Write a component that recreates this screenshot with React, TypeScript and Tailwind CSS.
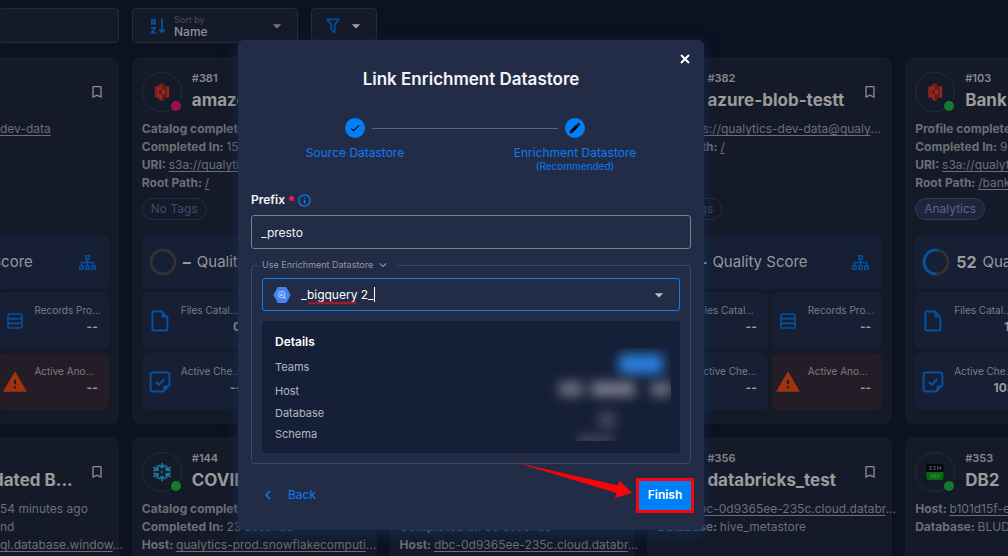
import React from "react";
import {
  MdArrowDropDown,
  MdBookmarkBorder,
  MdCheck,
  MdChevronLeft,
  MdEdit,
  MdExpandMore,
  MdInfoOutline,
  MdWarning,
} from "react-icons/md";

type Logo = "s3" | "snowflake" | "db2" | "none";

interface Line {
  label?: string;
  value: string;
  link?: boolean;
}

interface Store {
  id?: string;
  name?: string;
  logo: Logo;
  status?: "ok" | "error";
  lines: Line[];
  tag?: string;
  score?: string;
  files?: string;
  checks?: string;
  clipped?: boolean;
}

const topRow: Store[] = [
  { logo: "none", clipped: true, lines: [{ value: "dev-data", link: true }], score: "" },
  {
    id: "#381",
    name: "amazon",
    logo: "s3",
    status: "error",
    lines: [
      { label: "Catalog completed", value: "" },
      { label: "Completed In:", value: "15" },
      { label: "URI:", value: "s3a://qualytics", link: true },
      { label: "Root Path:", value: "/", link: true },
    ],
    tag: "No Tags",
    score: "–",
    files: "0",
    checks: "--",
  },
  { logo: "none", lines: [] },
  {
    id: "#382",
    name: "azure-blob-testt",
    logo: "none",
    lines: [
      { label: "URI:", value: "abfs://qualytics-dev-data@qualy", link: true },
      { label: "Root Path:", value: "/", link: true },
    ],
    tag: "No Tags",
    score: "–",
    files: "--",
    checks: "--",
  },
  {
    id: "#103",
    name: "Bank Dataset",
    logo: "s3",
    status: "ok",
    lines: [
      { label: "Profile completed", value: "" },
      { label: "Completed In:", value: "9 seconds" },
      { label: "URI:", value: "s3a://qualytics", link: true },
      { label: "Root Path:", value: "/bank", link: true },
    ],
    tag: "Analytics",
    score: "52",
    files: "11",
    checks: "103",
  },
];

const bottomRow: Store[] = [
  {
    name: "dated B...",
    logo: "none",
    clipped: true,
    lines: [
      { value: "54 minutes ago" },
      { value: "nd" },
      { value: "ql.database.window", link: true },
    ],
  },
  {
    id: "#144",
    name: "COVID",
    logo: "snowflake",
    status: "ok",
    lines: [
      { label: "Catalog completed", value: "" },
      { label: "Completed In:", value: "23 seconds" },
      { label: "Host:", value: "qualytics-prod.snowflakecomputi", link: true },
    ],
  },
  {
    logo: "none",
    lines: [
      { value: "" },
      { label: "Completed In:", value: "30 seconds" },
      { label: "Host:", value: "dbc-0d9365ee-235c.cloud.databr", link: true },
    ],
  },
  {
    id: "#356",
    name: "databricks_test",
    logo: "none",
    lines: [
      { label: "Host:", value: "dbc-0d9365ee-235c.cloud.databr", link: true },
      { label: "Database:", value: "hive_metastore" },
    ],
  },
  {
    id: "#353",
    name: "DB2",
    logo: "db2",
    status: "ok",
    lines: [
      { label: "Host:", value: "b101d15f-e7", link: true },
      { label: "Database:", value: "BLUDB" },
    ],
  },
];

function SortIcon() {
  return (
    <svg viewBox="0 0 16 16" className="h-4 w-4 shrink-0 text-[#04529f]" fill="none" stroke="currentColor" strokeWidth="1.8">
      <path d="M1.8 7V1.8H5V7M1.8 4.8H5M1 9.8H5.2L1.8 14.6H5.8" />
      <path d="M12 0.5V14M9.2 11.4L12 14.2L14.8 11.4" />
    </svg>
  );
}

function FilterIcon() {
  return (
    <svg viewBox="0 0 24 24" className="h-5 w-5 text-[#04529f]" fill="currentColor">
      <path d="M15,19.88C15.04,20.18 14.94,20.5 14.71,20.71C14.32,21.1 13.69,21.1 13.3,20.71L9.29,16.7C9.06,16.47 8.96,16.16 9,15.87V10.75L4.21,4.62C3.87,4.19 3.95,3.56 4.38,3.22C4.57,3.08 4.78,3 5,3H19C19.22,3 19.43,3.08 19.62,3.22C20.05,3.56 20.13,4.19 19.79,4.62L15,10.75V19.88M7.04,5L11,10.06V15.58L13,17.58V10.05L16.96,5H7.04Z" />
    </svg>
  );
}

function SitemapIcon() {
  return (
    <svg viewBox="0 0 17 15" className="h-[15px] w-[17px] text-[#04529f]" fill="none" stroke="currentColor" strokeWidth="1.5">
      <rect x="6.8" y="0.8" width="3.4" height="3.2" />
      <rect x="0.8" y="11" width="3.4" height="3.2" />
      <rect x="6.8" y="11" width="3.4" height="3.2" />
      <rect x="12.8" y="11" width="3.4" height="3.2" />
      <path d="M8.5 4V11M2.5 11V7.6H14.5V11" />
    </svg>
  );
}

function RecordsIcon() {
  return (
    <svg viewBox="0 0 16 16" className="h-4 w-4 text-[#04529f]" fill="none" stroke="currentColor" strokeWidth="1.6">
      <rect x="1" y="1" width="14" height="14" rx="1.6" />
      <path d="M1 5.6H15M1 10.4H15" />
    </svg>
  );
}

function FileIcon() {
  return (
    <svg viewBox="0 0 18 22" className="h-[22px] w-[18px] text-[#04529f]" fill="none" stroke="currentColor" strokeWidth="2">
      <path d="M2.6 1.4H11L16.4 7.4V19Q16.4 20.6 14.8 20.6H2.8Q1.4 20.6 1.4 19V2.8Q1.4 1.4 2.6 1.4Z" strokeLinejoin="round" />
      <path d="M10.6 1.2V7.6H16.6Z" fill="currentColor" stroke="none" />
    </svg>
  );
}

function CheckNoteIcon() {
  return (
    <svg viewBox="0 0 22 22" className="h-[22px] w-[22px] text-[#04529f]" fill="none" stroke="currentColor" strokeWidth="2">
      <path d="M14.6 20.4H4Q1.6 20.4 1.6 18V4Q1.6 1.6 4 1.6H18Q20.4 1.6 20.4 4V14.4Z" strokeLinejoin="round" />
      <path d="M14.4 20.6V16Q14.4 14.4 16 14.4H20.6Z" fill="currentColor" stroke="none" />
      <path d="M6.8 11L9.8 13.8L15.4 8" />
    </svg>
  );
}

function LogoMark({ logo }: { logo: Logo }) {
  if (logo === "s3")
    return (
      <svg viewBox="0 0 18 20" className="h-[18px] w-4">
        <path d="M1 4.2L3.4 3.2V16.8L1 15.8Z" fill="#7d231e" />
        <path d="M3.4 3.2L9 4.4V15.6L3.4 16.8Z" fill="#93281f" />
        <path d="M17 4.2L14.6 3.2V16.8L17 15.8Z" fill="#93281f" />
        <path d="M14.6 3.2L9 4.4V15.6L14.6 16.8Z" fill="#6c1f1b" />
        <path d="M9 0L12.4 1.7V6.2L9 6.8L5.6 6.2V1.7Z" fill="#7d241f" />
        <path d="M9 0L12.4 1.7V6.2L9 6.8Z" fill="#5c1a18" />
        <path d="M9 8L12.4 8.4V11.6L9 12L5.6 11.6V8.4Z" fill="#55191a" />
        <path d="M9 8L12.4 8.4V11.6L9 12Z" fill="#9a3529" />
        <path d="M9 13.2L12.4 13.8V18.3L9 20L5.6 18.3V13.8Z" fill="#8d291f" />
        <path d="M9 13.2L12.4 13.8V18.3L9 20Z" fill="#5c1a18" />
      </svg>
    );
  if (logo === "snowflake")
    return (
      <svg viewBox="-10 -10 20 20" className="h-5 w-5" fill="none" stroke="#1a7498" strokeWidth="1.9" strokeLinecap="round" strokeLinejoin="round">
        <path d="M-2.6 -6.6L0 -4.6L2.6 -6.6M0 -4.6V-8.4" />
        <path d="M-2.6 6.6L0 4.6L2.6 6.6M0 4.6V8.4" />
        <path d="M-8 -4.4L-4 -2.2L-4.6 -5.8M-4 -2.2L-8 -1.4" />
        <path d="M8 -4.4L4 -2.2L4.6 -5.8M4 -2.2L8 -1.4" />
        <path d="M-8 4.4L-4 2.2L-4.6 5.8M-4 2.2L-8 1.4" />
        <path d="M8 4.4L4 2.2L4.6 5.8M4 2.2L8 1.4" />
        <path d="M0 -1.4L1.4 0L0 1.4L-1.4 0Z" strokeWidth="1" />
      </svg>
    );
  if (logo === "db2")
    return (
      <svg viewBox="0 0 18 18" className="h-[18px] w-[18px]">
        <rect x="0.5" y="1" width="17" height="16" rx="2.5" fill="#02060a" />
        <path d="M0.5 9H17.5V14.5Q17.5 17 15 17H3Q0.5 17 0.5 14.5Z" fill="#0a6a12" />
        <path d="M3.4 3.5H5.6M4.5 3.5V6.5M3.4 6.5H5.6M7.4 3.5H9.8M7.4 5H9.8M7.4 6.5H9.8M11.6 6.8V3.5L13.1 5.5L14.6 3.5V6.8" fill="none" stroke="#707070" strokeWidth="0.7" />
        <path d="M5 11.5V14.5H6.8V11.5ZM8.4 11.5H9.8V14.5H8.4ZM11.4 11.5H13V13H11.6V14.5H13.2" fill="none" stroke="#4f9455" strokeWidth="0.6" />
      </svg>
    );
  return null;
}

function ScoreRing({ value }: { value: number }) {
  return (
    <svg viewBox="0 0 28 28" className="h-7 w-7 shrink-0" fill="none" strokeWidth="2.8">
      <circle cx="14" cy="14" r="12" stroke="#333230" />
      {value > 0 && (
        <circle cx="14" cy="14" r="12" stroke="#04529f" pathLength={100} strokeDasharray={`${value} 100`} transform="rotate(90 14 14)" />
      )}
    </svg>
  );
}

interface MetricProps {
  icon: React.ReactNode;
  label: string;
  value: string;
  danger?: boolean;
  narrow?: boolean;
}

function Metric({ icon, label, value, danger, narrow }: MetricProps) {
  return (
    <div className={`flex h-[57px] items-center rounded-md pr-[11px] ${danger ? "bg-[#241c26]" : "bg-[#161f34]"}`}>
      <div className={`flex shrink-0 items-center justify-center ${narrow ? "w-[33px]" : "w-9"}`}>{icon}</div>
      <div className="flex min-w-0 flex-1 flex-col pb-1 pl-[3px]">
        <span className="whitespace-nowrap text-[10px] leading-4 text-[#7b7d82]">{label}</span>
        <span className="text-right text-xs font-bold leading-[18px] text-[#9b9b9b]">{value}</span>
      </div>
    </div>
  );
}

function StoreCard({ store }: { store: Store }) {
  const clip = store.clipped;
  return (
    <article className="flex min-h-[367px] min-w-0 flex-col rounded-lg bg-[#151a29] px-2.5 pb-3.5 pt-[15px]">
      <header className="flex h-10 items-center">
        <div className="relative flex h-10 w-10 shrink-0 items-center justify-center rounded-full border border-[#262b38]">
          <LogoMark logo={store.logo} />
          {store.status && (
            <span className={`absolute bottom-0 right-0 h-2.5 w-2.5 rounded-full ${store.status === "ok" ? "bg-[#157a2b]" : "bg-[#9c1145]"}`} />
          )}
        </div>
        <div className={`flex min-w-0 flex-1 flex-col justify-center ${clip ? "items-end pr-4" : "pl-2.5"}`}>
          <span className="h-4 text-[11px] font-semibold leading-4 text-[#87888b]">{store.id}</span>
          <h2 className="h-7 whitespace-nowrap text-[17px] font-bold leading-7 text-[#9b9b9b]">{store.name}</h2>
        </div>
        <button type="button" aria-label="Bookmark" className="mr-1 shrink-0 text-[#8c8d90]">
          <MdBookmarkBorder className="h-4 w-4" />
        </button>
      </header>
      <div className={`mt-2 flex h-[71px] flex-col text-xs leading-[18px] text-[#6c6f75] ${clip ? "pl-[116px]" : ""}`}>
        {store.lines.map((line, i) => (
          <p key={i} className="h-[18px] whitespace-nowrap">
            {line.label && <b className="font-bold">{line.label} </b>}
            {line.link ? (
              <a href="#" className="underline underline-offset-2">{line.value}</a>
            ) : (
              line.value
            )}
            {line.link && line.value.length > 17 && "..."}
          </p>
        ))}
      </div>
      {store.score !== undefined && (
        <>
          <div className="mt-[7px] flex h-[22px]">
            {store.tag && (
              <span className={`flex h-[22px] items-center rounded-full border px-2 text-xs ${store.tag === "Analytics" ? "border-[#32385a] bg-[#20253c] text-[#5b628a]" : "border-[#262d42] text-[#3f4a74]"}`}>
                {store.tag}
              </span>
            )}
          </div>
          <div className="mt-[15px] flex h-[54px] items-center rounded-md bg-[#161f34] pl-[7px] pr-[13px]">
            <ScoreRing value={Number(store.score) || 0} />
            {store.score && <b className="ml-1.5 text-base font-bold text-[#9b9b9b]">{store.score}</b>}
            <span className={`text-[15px] text-[#97999d] ${clip ? "flex-1 pr-[46px] text-right" : "ml-1.5 flex-1"}`}>Quality Score</span>
            <SitemapIcon />
          </div>
          <div className="mt-[3px] grid grid-cols-2 gap-1">
            <Metric icon={<FileIcon />} label="Files Catal..." value={store.files ?? ""} />
            <Metric narrow icon={<RecordsIcon />} label="Records Pro..." value="--" />
            <Metric icon={<CheckNoteIcon />} label="Active Che..." value={store.checks ?? ""} />
            <Metric narrow danger icon={<MdWarning className="h-[26px] w-[26px] text-[#a2330f]" />} label="Active Ano..." value="--" />
          </div>
        </>
      )}
    </article>
  );
}

function Step({ icon, label, note }: { icon: React.ReactNode; label: string; note?: string }) {
  return (
    <li className="flex w-[140px] flex-col items-center text-[#0a7df2]">
      <span className="flex h-5 w-5 items-center justify-center rounded-full bg-[#0080f8] text-black">{icon}</span>
      <span className="mt-[7px] whitespace-nowrap text-xs leading-4">{label}</span>
      {note && <span className="text-[10px] leading-[10px]">{note}</span>}
    </li>
  );
}

function Dialog() {
  return (
    <section
      role="dialog"
      aria-labelledby="dialog-title"
      className="relative w-[466px] rounded-md bg-[#232c46] px-[13px] pb-5 pt-[27px] shadow-[0_4px_12px_2px_rgba(20,48,90,0.55)]"
    >
      <button type="button" aria-label="Close" className="absolute right-[11px] top-[11px] text-white">
        <svg viewBox="0 0 16 16" className="h-4 w-4" fill="none" stroke="currentColor" strokeWidth="2">
          <path d="M4 4L12 12M12 4L4 12" />
        </svg>
      </button>
      <h1 id="dialog-title" className="text-center text-[17px] font-semibold leading-6 text-[#f3f4f6]">
        Link Enrichment Datastore
      </h1>

      <ol className="ml-[34px] mt-[27px] flex h-[55px] w-[360px] items-start">
        <Step icon={<MdCheck className="h-3 w-3" />} label="Source Datastore" />
        <li aria-hidden="true" className="-mx-[53px] mt-2.5 h-px flex-1 bg-[#5c6579]" />
        <Step icon={<MdEdit className="h-3.5 w-3.5" />} label="Enrichment Datastore" note="(Recommended)" />
      </ol>

      <div className="mt-[19px] flex h-4 items-center">
        <label htmlFor="prefix" className="text-xs font-semibold text-[#f3f4f6]">Prefix</label>
        <span className="mb-1 ml-1 h-[5px] w-[5px] rounded-full bg-[#f5165f]" />
        <MdInfoOutline className="ml-[3px] h-[15px] w-[15px] text-[#0a7df2]" />
      </div>
      <input
        id="prefix"
        defaultValue="_presto"
        className="mt-[7px] block h-[34px] w-full rounded-[3px] border border-[#7d7f85] bg-transparent px-[9px] text-xs text-[#f3f4f6] outline-none"
      />

      <fieldset className="mt-2.5 rounded-[3px] border border-[#3f4760] px-2.5 pb-2.5">
        <legend className="-ml-1 px-1">
          <button type="button" className="flex h-3 items-center text-[9px] leading-3 text-[#9297a5]">
            Use Enrichment Datastore
            <MdExpandMore className="mx-[3px] h-3.5 w-3.5" />
          </button>
        </legend>
        <div className="relative mt-[7px] flex h-[33px] items-center rounded-[3px] border border-[#0a7df2] px-2.5">
          <svg viewBox="0 0 18 18" className="h-[18px] w-[18px] shrink-0">
            <path d="M4.9 1H13.1L17.6 9L13.1 17H4.9L0.4 9Z" fill="#4384f3" />
            <circle cx="8.7" cy="8.6" r="3.2" fill="none" stroke="#c6dafc" strokeWidth="0.9" />
            <path d="M7.5 8.4V9.8M8.7 7.4V10M9.9 8.8V9.8M11 11L12.8 12.8" stroke="#dbe8ff" strokeWidth="0.9" />
          </svg>
          <input
            aria-label="Enrichment datastore"
            role="combobox"
            aria-expanded="false"
            defaultValue="_bigquery 2_"
            spellCheck={false}
            className="ml-2.5 min-w-0 flex-1 bg-transparent text-xs text-white outline-none"
          />
          <svg viewBox="0 0 49 4" className="absolute left-[45px] top-[22px] h-1 w-[49px]" fill="none" stroke="#d3162c" strokeWidth="1.1">
            <path d="M0 1L2 3L4 1L6 3L8 1L10 3L12 1L14 3L16 1L18 3L20 1L22 3L24 1L26 3L28 1L30 3L32 1L34 3L36 1L38 3L40 1L42 3L44 1L46 3L48 1" />
          </svg>
          <span className="absolute left-[111px] top-2 h-[15px] w-px bg-white" />
          <MdArrowDropDown className="h-5 w-5 text-[#b9bdc7]" />
        </div>

        <div className="relative mt-2.5 rounded bg-[#161f38] px-[13px] pb-2 pt-3">
          <h2 className="text-xs font-semibold leading-[18px] text-white">Details</h2>
          <dl className="mt-[3px] text-[11px] text-[#b4b7bf]">
            <dt className="flex h-[26px] items-center">Teams</dt>
            <dt className="flex h-[22px] items-center">Host</dt>
            <dt className="flex h-[22px] items-center">Database</dt>
            <dt className="flex h-[21px] items-center">Schema</dt>
          </dl>
          <div aria-hidden="true" className="absolute bottom-3 right-[9px] top-[27px] w-[130px] overflow-hidden">
            <span className="absolute right-2 top-1.5 h-5 w-11 rounded bg-[#2a80dc] blur-[6px]" />
            <span className="absolute left-[18px] top-[34px] h-3.5 w-6 bg-[#70727f] blur-[6px]" />
            <span className="absolute left-[50px] top-[34px] h-3.5 w-11 bg-[#7d7f8b] blur-[6px]" />
            <span className="absolute right-0 top-[34px] h-3.5 w-5 bg-[#70727f] blur-[6px]" />
            <span className="absolute left-[58px] top-[64px] h-4 w-4 bg-[#464a60] blur-[6px]" />
            <span className="absolute left-9 top-[86px] h-3 w-9 bg-[#3c4054] blur-[5px]" />
          </div>
        </div>
      </fieldset>

      <footer className="mt-4 flex h-[30px] items-center justify-between">
        <button type="button" className="flex items-center text-xs text-[#0a7df2]">
          <MdChevronLeft className="ml-2 mr-[11px] h-[18px] w-[18px]" />
          Back
        </button>
        <button type="button" className="h-[29px] w-[52px] bg-[#0080f8] text-xs font-semibold text-white outline-3 outline-[#fb0307]">
          Finish
        </button>
      </footer>
      <svg viewBox="0 0 118 38" aria-hidden="true" className="absolute bottom-[30px] right-[71px] h-[38px] w-[118px]">
        <path d="M1 0.5L103 23.5L104.5 18.5L117 31L100 36L101.5 31Z" fill="#fb0307" />
      </svg>
    </section>
  );
}

export default function App() {
  return (
    <div className="relative h-screen overflow-hidden bg-[#0c1222] font-['Inter','Noto_Sans',sans-serif]">
      <main>
        <div className="flex h-[57px] gap-[13px] pt-2">
          <input aria-label="Search" className="-ml-px h-[35px] w-[120px] rounded border border-[#262b38] bg-[#151a29]" />
          <button type="button" className="flex h-[35px] w-[166px] items-center rounded border border-[#262b38] bg-[#151a29] pl-[17px] pr-2.5 text-left">
            <SortIcon />
            <span className="ml-2 flex flex-1 flex-col">
              <span className="text-[9px] leading-3 text-[#4a4c53]">Sort by</span>
              <span className="text-xs font-medium leading-3 text-[#8f9093]">Name</span>
            </span>
            <MdArrowDropDown className="h-5 w-5 text-[#77797d]" />
          </button>
          <button type="button" aria-label="Filter" className="flex h-[35px] w-[66px] items-center rounded border border-[#262b38] bg-[#151a29] pl-[11px]">
            <FilterIcon />
            <MdArrowDropDown className="ml-[3px] h-5 w-5 text-[#a3a3a0]" />
          </button>
        </div>
        <div className="-ml-[126px] -mr-[142px] grid grid-cols-5 gap-[13px]">
          {[...topRow, ...bottomRow].map((store, i) => (
            <StoreCard key={i} store={store} />
          ))}
        </div>
      </main>
      <div className="absolute inset-0 flex items-start justify-center pr-[66px] pt-10">
        <Dialog />
      </div>
    </div>
  );
}
